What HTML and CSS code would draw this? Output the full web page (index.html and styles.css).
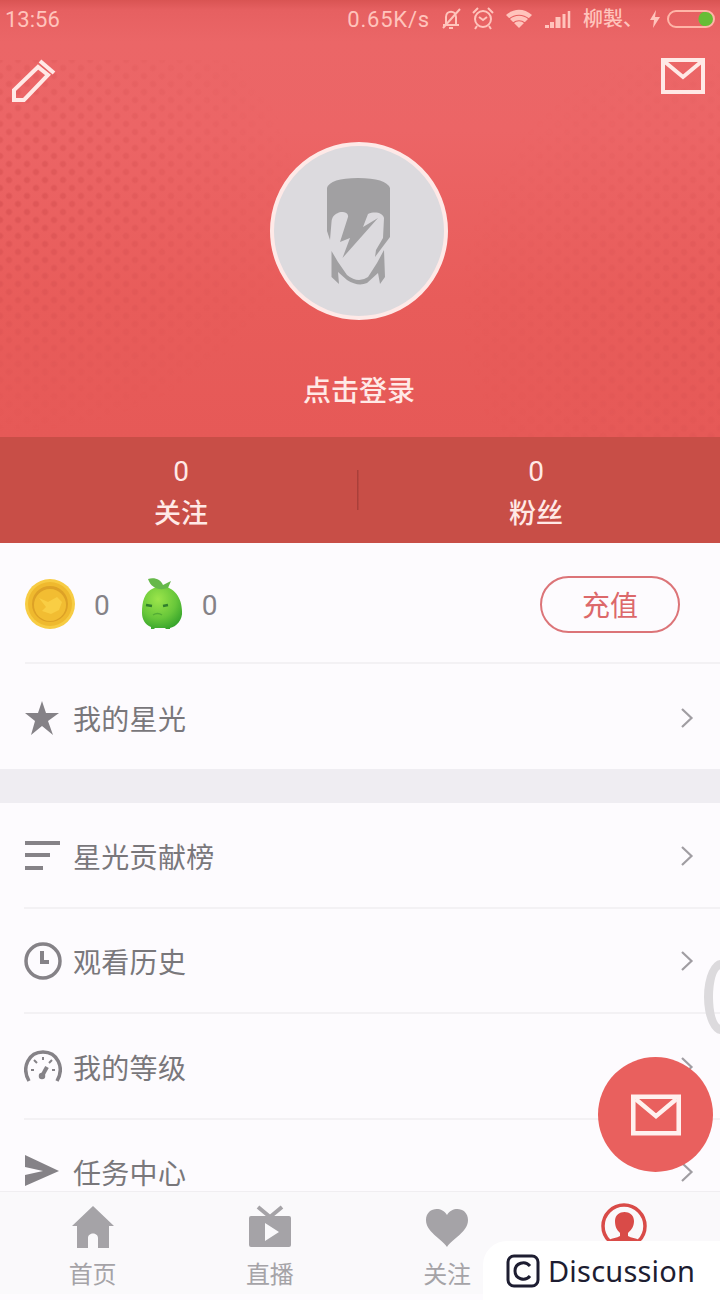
FILE: index.html
```
<!DOCTYPE html>
<html lang="zh-CN">
<head>
    <meta charset="UTF-8">
    <meta name="viewport" content="width=device-width, initial-scale=1.0">
    <title>我的</title>
    <link rel="stylesheet" href="styles.css">
</head>
<body>
    <svg width="0" height="0" class="defs">
        <symbol id="mail" viewBox="0 0 44 36">
            <path d="M2 2h40v32H2z" fill="none" stroke="currentColor" stroke-width="4"/>
            <path d="M4 4l18 15L40 4" fill="none" stroke="currentColor" stroke-width="4"/>
        </symbol>
        <symbol id="arrow" viewBox="0 0 14 22">
            <path d="M2 2l9.500 9L2 20" fill="none" stroke="currentColor" stroke-width="2.200"/>
        </symbol>
    </svg>

    <div class="screen">
        <header class="profile">
            <div class="status-bar">
                <span class="time">13:56</span>
                <span class="speed">0.65K/s</span>
                <svg class="status-icons" width="130" height="26" viewBox="0 0 130 26" fill="none" stroke="currentColor" stroke-width="2">
                    <path d="M2 19h16M5 19v-8c0-7 10-7 10 0v8M8 22h4M19 3L2 22"/>
                    <circle cx="42" cy="13" r="8"/>
                    <path d="M38 11l4 3 4-3M32 7l5-5M52 7l-5-5M36 20l-2 3M48 20l2 3"/>
                    <path d="M65 9c8-7 18-7 26 0L78 22z" fill="currentColor" stroke="none"/>
                    <path d="M68 13c6-5 14-5 20 0M72 17c4-3 8-3 12 0" stroke="#e85f60" stroke-width="1.200"/>
                    <path d="M106 22v-3M111 22v-6" stroke-width="4"/>
                    <path d="M117 22V11" stroke-width="5"/>
                    <path d="M123 22V8" stroke-width="3"/>
                    <path d="M128 22V5" stroke-width="2.500"/>
                </svg>
                <span class="carrier">柳製、</span>
                <svg class="bolt" width="12" height="20" viewBox="0 0 12 20"><path d="M7 1L1 11h4l-1 8 7-11H6z" fill="currentColor"/></svg>
                <span class="battery"></span>
            </div>
            <div class="toolbar">
                <svg width="46" height="46" viewBox="0 0 46 46" fill="none" stroke="currentColor" stroke-width="4">
                    <path d="M3 42V32L27 9l10 8-24 25z"/>
                    <path d="M29 3l14 12"/>
                </svg>
                <svg class="mail-icon" width="44" height="36"><use href="#mail"/></svg>
            </div>
            <div class="avatar">
                <svg width="66" height="108" viewBox="0 0 66 108" fill="#a1a0a2">
                    <path d="M1 11Q4 1 32 1t32 10v49L49 80l1-7 7-12 1-20c-1-5-9-7-16-4l-5 13 15-9-35.500 40L24 61l-10 4 8-25c1-5-7-6-10-4-5 2-6 5-6.500 9L4 63l-3-9z"/>
                    <path d="M5.500 74L12 85l9 13q11 9 21 2l9-14 7-13 1 27-5 7-2-11-11 10q-9 4-20-3l-9-8 1 12-7.500-7z"/>
                </svg>
            </div>
            <div class="login">点击登录</div>
        </header>

        <div class="stats">
            <div class="stat"><span class="num">0</span><span>关注</span></div>
            <div class="stat"><span class="num">0</span><span>粉丝</span></div>
        </div>

        <div class="wallet">
            <svg width="52" height="52" viewBox="0 0 52 52">
                <circle cx="26" cy="26" r="25" fill="#f7cc43"/>
                <circle cx="26" cy="26" r="22" fill="#efb92e"/>
                <circle cx="26" cy="26" r="18" fill="#dda126"/>
                <circle cx="26" cy="27" r="16" fill="#f2bd32"/>
                <path d="M15 20l9 4 9-5 5 5-3 8-8 4-9-3 4-4z" fill="#f9ce44"/>
            </svg>
            <span class="num coin-num">0</span>
            <svg width="42" height="52" viewBox="0 0 42 52">
                <defs>
                    <radialGradient id="bean" cx=".4" cy=".3" r=".75">
                        <stop offset="0" stop-color="#9ce54b"/>
                        <stop offset=".6" stop-color="#68c73a"/>
                        <stop offset="1" stop-color="#35a32b"/>
                    </radialGradient>
                </defs>
                <path d="M13 10C29 4 41 17 41 33c1 9-6 16-12 17v1h-4l-1-1H14l-1 1h-3v-2C4 47 1 41 1 35 1 24 3 14 13 10z" fill="url(#bean)"/>
                <path d="M7 1c7-2 13 1 15 6l8-4-3 7c-9 3-17 0-20-9z" fill="#66b84a"/>
                <path d="M5 27l6 1M22 28l5-1" stroke="#317f2c" stroke-width="2.500"/>
                <path d="M12 37c3-2 6-2 9 0" fill="none" stroke="#54ad35" stroke-width="1.500"/>
            </svg>
            <span class="num bean-num">0</span>
            <button class="recharge">充值</button>
        </div>

        <div class="row starlight">
            <svg class="row-icon" width="38" height="38" viewBox="0 0 38 38" fill="currentColor"><path d="M18 2l4 12h13l-11 8 5 14-11-9-11 9 4-14L1 14h13z"/></svg>
            <span>我的星光</span>
            <svg class="arrow" width="14" height="22"><use href="#arrow"/></svg>
        </div>

        <div class="divider"></div>

        <div class="list">
            <div class="row">
                <svg class="row-icon" width="38" height="38" viewBox="0 0 38 38" stroke="currentColor" stroke-width="4"><path d="M1 6h35M1 18h25M1 31h18"/></svg>
                <span>星光贡献榜</span>
                <svg class="arrow" width="14" height="22"><use href="#arrow"/></svg>
            </div>
            <div class="row">
                <svg class="row-icon" width="38" height="38" viewBox="0 0 38 38" fill="none" stroke="currentColor">
                    <circle cx="19" cy="19" r="17" stroke-width="3.500"/>
                    <path d="M18 9v11h7" stroke-width="4"/>
                </svg>
                <span>观看历史</span>
                <svg class="arrow" width="14" height="22"><use href="#arrow"/></svg>
            </div>
            <div class="row">
                <svg class="row-icon" width="38" height="38" viewBox="0 0 38 38" fill="none" stroke="currentColor" stroke-width="3.500">
                    <path d="M5 33C-3 19 5 4 19 4s22 15 14 29"/>
                    <path d="M18 28l5-9" stroke-width="4"/>
                    <path d="M7 22h3M10 12l3 3M19 9v3M28 12l-3 3M31 22h-3" stroke-width="2"/>
                    <circle cx="18" cy="28" r="1.500"/>
                </svg>
                <span>我的等级</span>
                <svg class="arrow" width="14" height="22"><use href="#arrow"/></svg>
            </div>
            <div class="row">
                <svg class="row-icon" width="38" height="38" viewBox="0 0 38 38" fill="currentColor"><path d="M1 2l34 16L1 33V22l18-4L1 14z"/></svg>
                <span>任务中心</span>
                <svg class="arrow" width="14" height="22"><use href="#arrow"/></svg>
            </div>
        </div>

        <div class="edge-handle"></div>
        <div class="fab"><svg width="50" height="42"><use href="#mail"/></svg></div>

        <nav class="tab-bar">
            <div class="tab">
                <svg width="44" height="44" viewBox="0 0 44 44" fill="currentColor"><path d="M22 1l21 20h-5v22H27V33c0-6-10-6-10 0v10H6V21H1z"/></svg>
                <span>首页</span>
            </div>
            <div class="tab">
                <svg width="44" height="44" viewBox="0 0 44 44">
                    <path d="M10 2l12 10L34 2" fill="none" stroke="currentColor" stroke-width="4"/>
                    <path d="M3 11h38q2 0 2 2v27q0 2-2 2H3q-2 0-2-2V13q0-2 2-2zM17 18v18l14-9z" fill="currentColor" fill-rule="evenodd"/>
                </svg>
                <span>直播</span>
            </div>
            <div class="tab">
                <svg width="44" height="44" viewBox="0 0 44 44" fill="currentColor"><path d="M22 42C16 33 1 27 1 15 1 3 16 0 22 10 28 0 43 3 43 15c0 12-15 18-21 27z"/></svg>
                <span>关注</span>
            </div>
            <div class="tab active">
                <svg width="46" height="46" viewBox="0 0 46 46">
                    <circle cx="23" cy="23" r="21" fill="none" stroke="currentColor" stroke-width="3.500"/>
                    <path d="M14 18c0-12 19-12 19 0 0 6-3 9-6 12v3c3 2 8 2 11 4-9 8-21 8-30 0 3-2 8-2 11-4v-3c-3-3-5-6-5-12z" fill="currentColor"/>
                </svg>
            </div>
        </nav>

        <div class="discussion">
            <svg width="34" height="34" viewBox="0 0 34 34" fill="none" stroke="currentColor" stroke-width="3">
                <rect x="2" y="2" width="30" height="30" rx="6"/>
                <path d="M24 12c-5-6-15-3-15 5s10 11 15 5"/>
            </svg>
            <span>Discussion</span>
        </div>
    </div>
</body>
</html>
```

FILE: styles.css
```
* {
    box-sizing: border-box;
}

body {
    margin: 0;
    background: #fff;
    font-family: Roboto, "Noto Sans CJK SC", sans-serif;
    overflow: hidden;
}

svg {
    display: block;
    flex-shrink: 0;
}

.defs {
    position: absolute;
}

.screen {
    position: relative;
    display: flex;
    flex-direction: column;
    width: 720px;
    height: 1300px;
    background: #fdfbfe;
    overflow: hidden;
}

/* red header */
.profile {
    position: relative;
    z-index: 0;
    display: flex;
    flex-direction: column;
    align-items: center;
    height: 437px;
    flex-shrink: 0;
    background: linear-gradient(#d95453 0, #e66061 10px, #eb6667 42px, #ec6566 130px, #e85c5a 300px, #e65957 437px);
    color: #ffe9e6;
}

/* halftone dots fading towards the middle */
.profile::before {
    content: "";
    position: absolute;
    z-index: -1;
    inset: 60px 0 0 0;
    background-image: radial-gradient(circle, #d34d4e 2px, transparent 4px), radial-gradient(circle, #d34d4e 2px, transparent 4px);
    background-size: 18px 16px;
    background-position: 0 0, 9px 8px;
    -webkit-mask-image: radial-gradient(ellipse 300px 230px at 0 38%, rgba(0, 0, 0, 0.55), transparent), radial-gradient(ellipse 260px 260px at 100% 65%, rgba(0, 0, 0, 0.3), transparent);
    mask-image: radial-gradient(ellipse 300px 230px at 0 38%, rgba(0, 0, 0, 0.55), transparent), radial-gradient(ellipse 260px 260px at 100% 65%, rgba(0, 0, 0, 0.3), transparent);
}

.status-bar {
    display: flex;
    align-items: center;
    width: 100%;
    height: 38px;
    padding: 0 5px;
    font-size: 22px;
    color: #ffc4bc;
}

.speed {
    margin-left: auto;
    letter-spacing: 0.8px;
}

.status-icons {
    margin-left: 11px;
}

.carrier {
    width: 56px;
    margin: -3px 0 0 12px;
    font-size: 20px;
    font-weight: 500;
    white-space: nowrap;
}

.bolt {
    margin: 0 6px 0 10px;
}

.battery {
    width: 48px;
    height: 18px;
    border: 2px solid #ffb5a8;
    border-radius: 9px;
    background: radial-gradient(circle at 37px 7px, #66bd36 7px, transparent 8px);
}

.toolbar {
    display: flex;
    justify-content: space-between;
    width: 100%;
    padding: 20px 15px 0 11px;
}

.avatar {
    display: flex;
    justify-content: center;
    align-items: center;
    width: 178px;
    height: 178px;
    margin: 38px 3px 0 0;
    border: 4px solid #fee9e7;
    border-radius: 50%;
    background: #dcdade;
}

.login {
    margin: 52px 2px 0 0;
    font-size: 28px;
    font-weight: 500;
    line-height: 40px;
}

.stats {
    display: flex;
    height: 106px;
    flex-shrink: 0;
    padding-right: 7px;
    background: #c84e47;
    color: #ffe9e6;
}

.stat {
    display: flex;
    flex-direction: column;
    align-items: center;
    flex: 1;
    padding: 13px 0 0 5px;
    font-size: 27px;
    font-weight: 500;
    line-height: 43px;
}

.stat:first-child {
    flex: 0 0 357px;
}

.stat + .stat {
    background: linear-gradient(#a93f3a, #a93f3a) 0 33px / 1.5px 40px no-repeat;
    padding-left: 2px;
}

.num {
    font-size: 28px;
    font-weight: 400;
}

.wallet {
    display: flex;
    align-items: center;
    height: 121px;
    flex-shrink: 0;
    margin-left: 25px;
    padding: 3px 40px 0 0;
    color: #858287;
    border-bottom: 2px solid #f3f1f4;
}

.wallet svg {
    margin-left: -1px;
}

.coin-num {
    margin: 3px 32px 0 18px;
}

.bean-num {
    margin: 3px 0 0 19px;
}

.recharge {
    width: 140px;
    height: 57px;
    margin-left: auto;
    border: 2px solid #dc7478;
    border-radius: 29px;
    background: transparent;
    color: #dc686a;
    font-family: inherit;
    font-size: 28px;
}

.row {
    display: flex;
    align-items: center;
    height: 105.5px;
    flex-shrink: 0;
    margin-left: 24px;
    padding: 2px 26px 0 0;
    border-bottom: 2px solid #f3f1f4;
    font-size: 28px;
    letter-spacing: 0.3px;
    color: #79777b;
}

.row-icon {
    margin-right: 11px;
    color: #858287;
}

.starlight {
    border-bottom: none;
    height: 105px;
}

.arrow {
    margin-left: auto;
    color: #a09da2;
}

.divider {
    height: 34px;
    flex-shrink: 0;
    background: #efedf2;
}

.list {
    height: 388px;
    flex-shrink: 0;
}

.edge-handle {
    position: absolute;
    top: 960px;
    right: -18px;
    width: 34px;
    height: 74px;
    border: 9px solid #dcdadd;
    border-radius: 50%;
}

.fab {
    position: absolute;
    top: 1057px;
    left: 598px;
    display: flex;
    justify-content: center;
    align-items: center;
    width: 115px;
    height: 115px;
    border-radius: 50%;
    background: #e9605e;
    color: #fff0ee;
}

.tab-bar {
    position: relative;
    display: flex;
    height: 103px;
    flex-shrink: 0;
    padding: 0 7px 0 4px;
    border-top: 1px solid #f0eef1;
    background: #faf9fb;
}

.tab {
    display: flex;
    flex-direction: column;
    align-items: center;
    flex: 1;
    padding-top: 13px;
    font-size: 24px;
    line-height: 36px;
    color: #a5a3a7;
}

.tab span {
    margin-top: 8px;
}

.tab.active {
    padding-top: 11px;
    color: #d94b48;
}

.discussion {
    position: absolute;
    right: 0;
    bottom: 0;
    display: flex;
    align-items: center;
    width: 237px;
    height: 59px;
    padding-left: 23px;
    border-top-left-radius: 24px;
    background: #fff;
    color: #1d1d31;
    font-family: "Noto Sans", sans-serif;
    font-size: 29px;
    letter-spacing: 0.2px;
}

.discussion span {
    margin-left: 8px;
}
```
